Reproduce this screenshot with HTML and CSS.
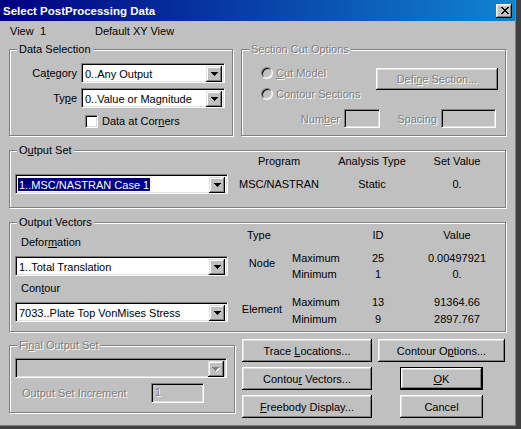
FILE: index.html
```html
<!DOCTYPE html>
<html lang="en">
<head>
  <meta charset="UTF-8" />
  <title>Select PostProcessing Data</title>
  <link rel="stylesheet" href="styles.css">
</head>
<body>

<div class="window">
<div class="frame">

  <div class="titlebar">
    <span class="title">Select PostProcessing Data</span>
    <span class="close">
      <svg width="8" height="7" viewBox="0 0 8 7" shape-rendering="crispEdges"><path d="M0 0h2v1H0zM6 0h2v1H6zM1 1h2v1H1zM5 1h2v1H5zM2 2h4v1H2zM3 3h2v1H3zM2 4h4v1H2zM1 5h2v1H1zM5 5h2v1H5zM0 6h2v1H0zM6 6h2v1H6z" fill="#000"/></svg>
    </span>
  </div>

  <div class="content">

    <div class="viewbar">
      <span class="v-lbl">View</span>
      <span class="v-num">1</span>
      <span>Default XY View</span>
    </div>

    <div class="row-top">
      <div class="group g-data">
        <span class="legend">Data Selection</span>
        <div class="field-row">
          <span class="lbl">Ca<u>t</u>egory</span>
          <div class="combo c-data">
            <span class="combo-text">0..Any Output</span>
            <span class="drop"><svg width="7" height="4" viewBox="0 0 7 4" shape-rendering="crispEdges"><path d="M0 0h7v1H0zM1 1h5v1H1zM2 2h3v1H2zM3 3h1v1H3z" fill="#000"/></svg></span>
          </div>
        </div>
        <div class="field-row second">
          <span class="lbl">Ty<u>p</u>e</span>
          <div class="combo c-data">
            <span class="combo-text">0..Value or Magnitude</span>
            <span class="drop"><svg width="7" height="4" viewBox="0 0 7 4" shape-rendering="crispEdges"><path d="M0 0h7v1H0zM1 1h5v1H1zM2 2h3v1H2zM3 3h1v1H3z" fill="#000"/></svg></span>
          </div>
        </div>
        <div class="check-row">
          <span class="checkbox"></span>
          <span>Data at Cor<u>n</u>ers</span>
        </div>
      </div>

      <div class="group g-sect off">
        <span class="legend">Section Cut Options</span>
        <div class="sect-top">
          <div class="radios">
            <div class="radio-row"><span class="radio"></span><span><u>C</u>ut Model</span></div>
            <div class="radio-row"><span class="radio"></span><span>Contour Sections</span></div>
          </div>
          <div class="btn define"><span>Defi<u>n</u>e Section...</span></div>
        </div>
        <div class="sect-bottom">
          <span class="lbl-num">Num<u>b</u>er</span>
          <span class="field f-num"></span>
          <span class="lbl-spc">Spacing</span>
          <span class="field f-spc"></span>
        </div>
      </div>
    </div>

    <div class="group g-set">
      <span class="legend">O<u>u</u>tput Set</span>
      <div class="combo c-set">
        <span class="combo-text"><span class="sel">1..MSC/NASTRAN Case 1</span></span>
        <span class="drop"><svg width="7" height="4" viewBox="0 0 7 4" shape-rendering="crispEdges"><path d="M0 0h7v1H0zM1 1h5v1H1zM2 2h3v1H2zM3 3h1v1H3z" fill="#000"/></svg></span>
      </div>
      <div class="set-table">
        <span>Program</span>
        <span>Analysis Type</span>
        <span>Set Value</span>
        <span>MSC/NASTRAN</span>
        <span>Static</span>
        <span>0.</span>
      </div>
    </div>

    <div class="group g-vec">
      <span class="legend">Output Vectors</span>
      <div class="vec-left">
        <span class="sub-lbl">Defor<u>m</u>ation</span>
        <div class="combo c-vec">
          <span class="combo-text">1..Total Translation</span>
          <span class="drop"><svg width="7" height="4" viewBox="0 0 7 4" shape-rendering="crispEdges"><path d="M0 0h7v1H0zM1 1h5v1H1zM2 2h3v1H2zM3 3h1v1H3z" fill="#000"/></svg></span>
        </div>
        <span class="sub-lbl second">Con<u>t</u>our</span>
        <div class="combo c-vec">
          <span class="combo-text">7033..Plate Top VonMises Stress</span>
          <span class="drop"><svg width="7" height="4" viewBox="0 0 7 4" shape-rendering="crispEdges"><path d="M0 0h7v1H0zM1 1h5v1H1zM2 2h3v1H2zM3 3h1v1H3z" fill="#000"/></svg></span>
        </div>
      </div>
      <div class="vec-table">
        <span class="c1 r1">Type</span>
        <span class="c3 r1">ID</span>
        <span class="c4 r1">Value</span>

        <span class="c1 node">Node</span>
        <span class="c2 r2">Maximum</span>
        <span class="c3 r2">25</span>
        <span class="c4 r2">0.00497921</span>
        <span class="c2 r3">Minimum</span>
        <span class="c3 r3">1</span>
        <span class="c4 r3">0.</span>

        <span class="c1 elem">Element</span>
        <span class="c2 r4">Maximum</span>
        <span class="c3 r4">13</span>
        <span class="c4 r4">91364.66</span>
        <span class="c2 r5">Minimum</span>
        <span class="c3 r5">9</span>
        <span class="c4 r5">2897.767</span>
      </div>
    </div>

    <div class="row-bottom">
      <div class="group g-final off">
        <span class="legend">Fi<u>n</u>al Output Set</span>
        <div class="combo c-final">
          <span class="combo-text"></span>
          <span class="drop"><svg width="8" height="5" viewBox="0 0 8 5" shape-rendering="crispEdges"><path d="M1 1h7v1H1zM2 2h5v1H2zM3 3h3v1H3zM4 4h1v1H4z" fill="#fff"/><path d="M0 0h7v1H0zM1 1h5v1H1zM2 2h3v1H2zM3 3h1v1H3z" fill="#808080"/></svg></span>
        </div>
        <div class="inc-row">
          <span class="lbl-inc">Output Set Increment</span>
          <span class="field f-inc">1</span>
        </div>
      </div>

      <div class="btns">
        <div class="btn"><span>Trace <u>L</u>ocations...</span></div>
        <div class="btn"><span>Contour O<u>p</u>tions...</span></div>
        <div class="btn"><span>Contou<u>r</u> Vectors...</span></div>
        <div class="btn small default"><span><u>O</u>K</span></div>
        <div class="btn"><span><u>F</u>reebody Display...</span></div>
        <div class="btn small"><span>Cancel</span></div>
      </div>
    </div>

  </div>
</div>
</div>

</body>
</html>
```

FILE: styles.css
```css
* { margin: 0; padding: 0; box-sizing: border-box; }
body {
  font-family: 'Liberation Sans', Arial, sans-serif;
  font-size: 11px;
  color: #000;
  background: #404040;
}
u { text-decoration: underline; text-underline-offset: 1px; }

.window {
  width: 521px;
  height: 429px;
  background: #404040;
}
.frame {
  width: 516px;
  height: 426px;
  background: #c0c0c0;
  border-right: 1px solid #808080;
  border-bottom: 1px solid #808080;
}

/* title bar */
.titlebar {
  height: 21px;
  display: flex;
  align-items: center;
  justify-content: space-between;
  padding: 0 3px 0 3px;
  background: linear-gradient(to right, #000080, #1084d0);
}
.title {
  color: white;
  font-weight: bold;
  font-size: 11.5px;
}
.close {
  width: 16px;
  height: 14px;
  display: flex;
  align-items: center;
  justify-content: center;
  padding-left: 1px;
  background: #c0c0c0;
  box-shadow: inset -1px -1px #000, inset 1px 1px #fff, inset -2px -2px #808080, inset 2px 2px #dfdfdf;
}

.content { padding-left: 9px; }

.viewbar {
  height: 28px;
  padding-top: 3px;
  line-height: 14px;
  display: flex;
}
.v-lbl { margin-left: 1px; width: 30px; }
.v-num { width: 55px; }

/* etched group box */
.group {
  position: relative;
  border: 1px solid #808080;
  box-shadow: inset 1px 1px #fff, 1px 1px #fff;
}
.legend {
  position: absolute;
  top: -8px;
  left: 7px;
  padding: 0 2px;
  line-height: 14px;
  background: #c0c0c0;
  white-space: nowrap;
}
.off .legend,
.off .radio-row,
.off .btn,
.off .lbl-num,
.off .lbl-spc,
.off .lbl-inc,
.off .f-inc {
  color: #808080;
  text-shadow: 1px 1px 0 #fff;
}

/* controls */
.combo {
  display: flex;
  height: 20px;
  padding: 2px;
  background: #fff;
  border: 1px solid;
  border-color: #808080 #fff #fff #808080;
  box-shadow: inset 1px 1px #000, inset -1px -1px #dfdfdf;
}
.combo-text {
  flex: 1;
  padding-left: 1px;
  line-height: 16px;
  white-space: nowrap;
  overflow: hidden;
}
.drop {
  width: 16px;
  height: 16px;
  display: flex;
  align-items: center;
  justify-content: center;
  background: #c0c0c0;
  box-shadow: inset -1px -1px #000, inset 1px 1px #dfdfdf, inset -2px -2px #808080, inset 2px 2px #fff;
}
.sel {
  display: inline-block;
  margin-left: -1px;
  padding: 0 1px;
  line-height: 14px;
  background: #000080;
  color: white;
}
.field {
  display: block;
  height: 19px;
  padding: 1px 0 0 3px;
  line-height: 15px;
  border: 1px solid;
  border-color: #808080 #fff #fff #808080;
  box-shadow: inset 1px 1px #000, inset -1px -1px #dfdfdf;
}
.checkbox {
  width: 13px;
  height: 13px;
  background: #fff;
  border: 1px solid;
  border-color: #808080 #fff #fff #808080;
  box-shadow: inset 1px 1px #000, inset -1px -1px #dfdfdf;
}
.radio {
  width: 12px;
  height: 12px;
  border-radius: 50%;
  border: 1px solid;
  border-color: #808080 #fff #fff #808080;
  box-shadow: inset 1px 1px #000, inset -1px -1px #dfdfdf;
}
.btn {
  display: flex;
  align-items: center;
  justify-content: center;
  height: 23px;
  background: #c0c0c0;
  white-space: nowrap;
  box-shadow: inset -1px -1px #000, inset 1px 1px #fff, inset -2px -2px #808080, inset 2px 2px #dfdfdf;
}
.btn.default {
  border: 1px solid #000;
}

/* data selection */
.row-top {
  display: flex;
  height: 87px;
}
.g-data { width: 224px; }
.field-row {
  display: flex;
  align-items: center;
  margin-top: 13px;
}
.field-row.second { margin-top: 5px; }
.lbl {
  width: 67px;
  margin-right: 4px;
  text-align: right;
}
.c-data { width: 144px; }
.check-row {
  display: flex;
  align-items: center;
  gap: 4px;
  margin-top: 7px;
  padding-left: 75px;
  line-height: 13px;
}

/* section cut options */
.g-sect {
  width: 265px;
  margin-left: 8px;
}
.sect-top { display: flex; }
.radios {
  width: 134px;
  padding: 12px 0 0 19px;
}
.radio-row {
  display: flex;
  align-items: center;
  gap: 3px;
  height: 21px;
}
.define {
  width: 122px;
  height: 22px;
  margin-top: 18px;
}
.sect-bottom {
  display: flex;
  align-items: center;
  margin-top: 5px;
}
.lbl-num { width: 98px; margin-right: 4px; text-align: right; }
.f-num { width: 36px; }
.lbl-spc { width: 57px; margin-right: 4px; text-align: right; }
.f-spc { width: 55px; }

/* output set */
.g-set {
  width: 497px;
  height: 58px;
  margin-top: 14px;
  display: flex;
}
.c-set {
  width: 213px;
  margin: 23px 0 0 5px;
}
.set-table {
  display: grid;
  grid-template-columns: 80px 106px 64px;
  grid-auto-rows: 14px;
  row-gap: 9px;
  margin-left: 11px;
  padding-top: 3px;
  line-height: 14px;
  text-align: center;
}

/* output vectors */
.g-vec {
  width: 497px;
  height: 110px;
  margin-top: 14px;
  display: flex;
}
.vec-left {
  width: 213px;
  margin-left: 5px;
  display: flex;
  flex-direction: column;
}
.sub-lbl {
  padding-left: 6px;
  line-height: 14px;
  margin-top: 12px;
}
.sub-lbl.second { margin-top: 5px; }
.c-vec { margin-top: 7px; }
.vec-table {
  display: grid;
  grid-template-columns: 46px 59px 68px 90px;
  grid-template-rows: 23px 16px 28px 17px 14px;
  margin-left: 11px;
  padding-top: 5px;
  line-height: 14px;
}
.c1 { grid-column: 1; text-align: center; }
.c2 { grid-column: 2; padding-left: 7px; }
.c3 { grid-column: 3; text-align: center; }
.c4 { grid-column: 4; text-align: center; }
.r1 { grid-row: 1; }
.r2 { grid-row: 2; }
.r3 { grid-row: 3; }
.r4 { grid-row: 4; }
.r5 { grid-row: 5; }
.c1.r1 { text-align: left; padding-left: 8px; }
.node { grid-row: 2 / span 2; margin-top: 5px; }
.elem { grid-row: 4 / span 2; margin-top: 7px; }

/* bottom row */
.row-bottom {
  display: flex;
  margin-top: 7px;
}
.g-final {
  width: 226px;
  height: 68px;
  margin-top: 6px;
}
.c-final {
  width: 212px;
  margin: 12px 0 0 5px;
  background: #c0c0c0;
}
.inc-row {
  display: flex;
  align-items: center;
  margin-top: 5px;
}
.lbl-inc {
  width: 141px;
  padding-left: 12px;
}
.f-inc { width: 53px; height: 20px; }

.btns {
  display: grid;
  grid-template-columns: 130px 127px;
  grid-auto-rows: 23px;
  column-gap: 6px;
  row-gap: 5px;
  margin-left: 7px;
}
.btn.small {
  width: 83px;
  justify-self: center;
}
```
